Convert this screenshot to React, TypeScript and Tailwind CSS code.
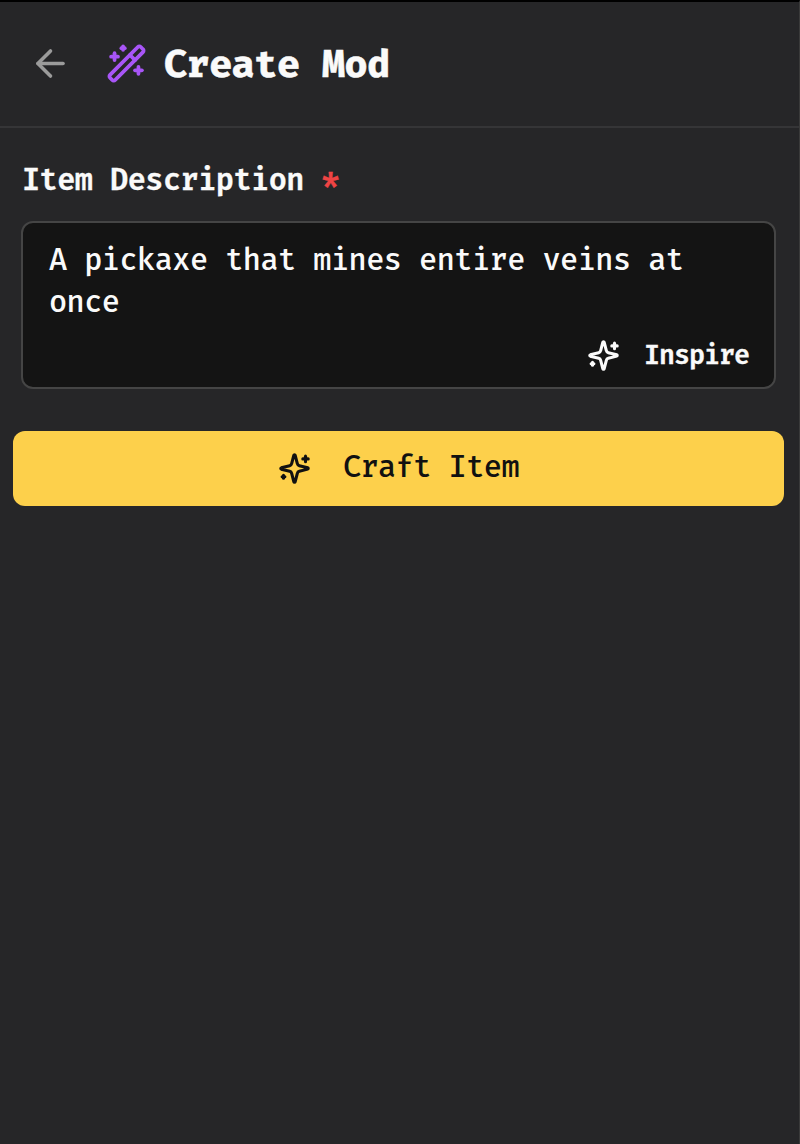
import { ArrowLeft, WandSparkles } from 'lucide-react'


const Sparkles = ({ className }: { className?: string }) => (
  <svg
    viewBox="0 0 24 24"
    fill="none"
    stroke="currentColor"
    strokeWidth="2.2"
    strokeLinecap="round"
    strokeLinejoin="round"
    className={className}
  >
    <path d="M9.937 15.5A2 2 0 0 0 8.5 14.063l-6.135-1.582a.5.5 0 0 1 0-.962L8.5 9.936A2 2 0 0 0 9.937 8.5l1.582-6.135a.5.5 0 0 1 .963 0L14.063 8.5A2 2 0 0 0 15.5 9.937l6.135 1.581a.5.5 0 0 1 0 .964L15.5 14.063a2 2 0 0 0-1.437 1.437l-1.582 6.135a.5.5 0 0 1-.963 0z" />
    <path d="M20 3v4" />
    <path d="M22 5h-4" />
    <path d="M4 17v2" />
    <path d="M5 18H3" />
  </svg>
)

const App = () => {
  return (
    <div className="h-[1144px] border-t-2 border-r border-t-black border-r-[#3a3a3a] bg-[#262628] font-['Fira_Code','DejaVu_Sans_Mono',monospace] text-neutral-50">
      <header className="flex h-[126px] items-center border-b-2 border-[#353537] pb-[2px] pl-[29px]">
        <button className="text-[#9b9b9b]">
          <ArrowLeft className="size-[43px]" />
        </button>
        <WandSparkles strokeWidth={2.2} className="ml-[34px] size-[41px] text-[#a855f7]" />
        <h1 className="ml-[17px] pt-[5px] text-[37.5px] leading-[48px] font-bold tracking-[-0.5px] [-webkit-text-stroke:0.5px]">
          Create Mod
        </h1>
      </header>

      <main className="flex flex-col pr-[15px] pl-[13px]">
        <div className="flex flex-col px-[8px] pt-[32px]">
          <label className="pl-px text-[29.5px] leading-[42px] font-semibold tracking-[-0.53px] [-webkit-text-stroke:0.3px]">
            Item Description <span className="text-[#ef4444]">*</span>
          </label>
          <div className="mt-[19px] flex h-[168px] flex-col rounded-[12px] border-2 border-[#454545] bg-[#141414] px-[25px] pt-[17px]">
            <p className="pl-px text-[29.5px] leading-[42px] font-medium tracking-[-0.53px]">
              A pickaxe that mines entire veins at once
            </p>
            <button className="mt-[10px] flex h-[42px] items-center gap-[24px] self-end text-[26px] font-semibold tracking-[-1px] [-webkit-text-stroke:0.3px]">
              <Sparkles className="size-[33px]" />
              <span className="pt-[2px]">Inspire</span>
            </button>
          </div>
        </div>

        <button className="mt-[42px] flex h-[75px] items-center justify-center gap-[32px] rounded-[12px] bg-[#fdd04b] text-[29.5px] font-medium tracking-[-0.53px] text-[#111111]">
          <Sparkles className="size-[33px]" />
          Craft Item
        </button>
      </main>
    </div>
  );
};


export default App;
